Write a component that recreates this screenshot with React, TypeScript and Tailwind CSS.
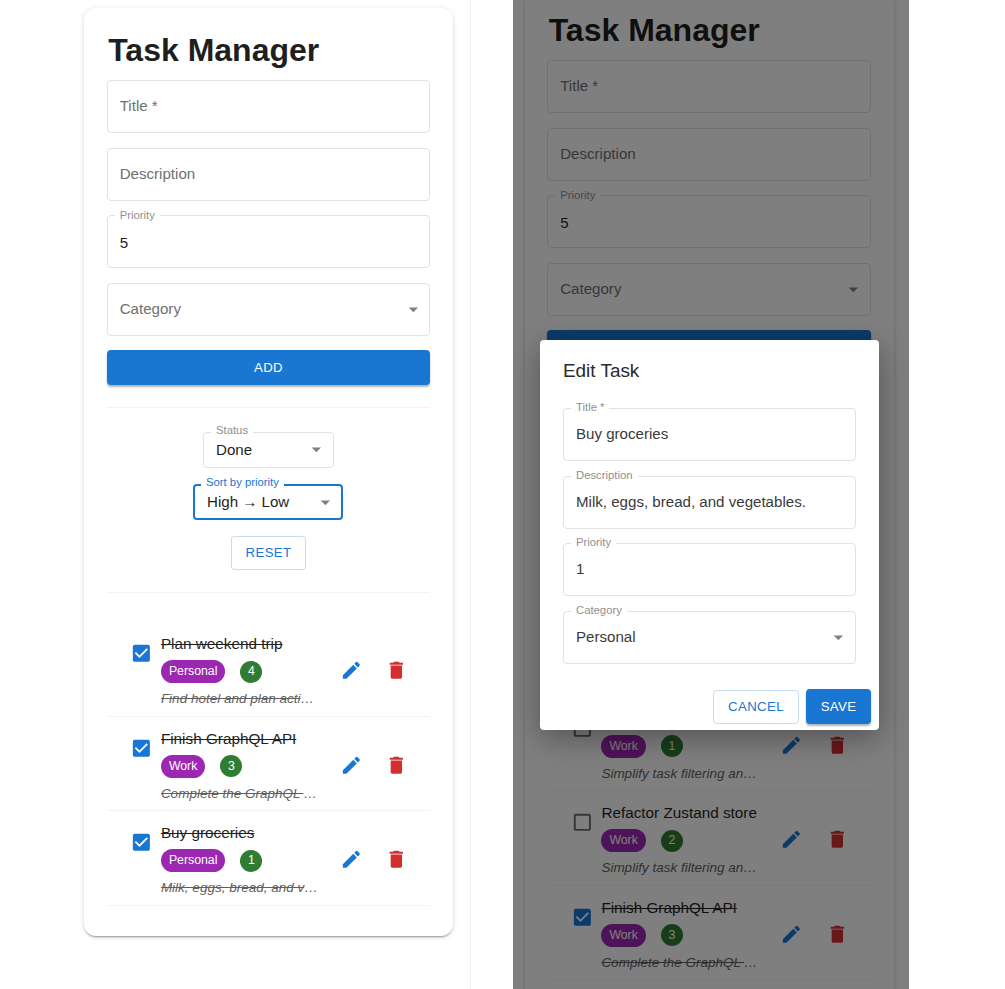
import React from "react";

const P = {
  edit: "M3 17.25V21h3.75L17.81 9.94l-3.75-3.75L3 17.25zM20.71 7.04c.39-.39.39-1.02 0-1.41l-2.34-2.34a.9959.9959 0 0 0-1.41 0l-1.83 1.83 3.75 3.75 1.83-1.83z",
  del: "M6 19c0 1.1.9 2 2 2h8c1.1 0 2-.9 2-2V7H6v12zM19 4h-3.5l-1-1h-5l-1 1H5v2h14V4z",
  checked: "M19 3H5c-1.11 0-2 .9-2 2v14c0 1.1.89 2 2 2h14c1.1 0 2-.9 2-2V5c0-1.1-.9-2-2-2zm-9 14l-5-5 1.41-1.41L10 14.17l7.59-7.59L19 8l-9 9z",
  blank: "M19 5v14H5V5h14m0-2H5c-1.1 0-2 .9-2 2v14c0 1.1.9 2 2 2h14c1.1 0 2-.9 2-2V5c0-1.1-.9-2-2-2z",
  arrow: "M7 10l5 5 5-5z",
};

function Icon({ d, className }: { d: string; className: string }) {
  return (
    <svg viewBox="0 0 24 24" className={className} fill="currentColor" aria-hidden="true">
      <path d={d} />
    </svg>
  );
}

function Field({ label, value, floated, select, dialog }: { label: string; value?: string; floated?: boolean; select?: boolean; dialog?: boolean }) {
  return (
    <div className="relative flex h-[53px] items-center rounded-[4px] border-[1.5px] border-[#e2e2e2] px-[12px]">
      {floated ? (
        <span className={`absolute left-[7px] bg-white px-[5px] text-[11.3px] leading-[13px] text-[#8f8f8f] ${dialog ? "top-[-8px]" : "top-[-7px]"}`}>{label}</span>
      ) : (
        <span className="text-[15.1px] text-[#707070]">{label}</span>
      )}
      {value && <span className={`text-[15.1px] ${dialog ? "text-[#3a3a3a]" : "mt-[4px] text-[#1f1f1f]"}`}>{value}</span>}
      {select && <Icon d={P.arrow} className="absolute right-[5px] top-[14px] h-[22.7px] w-[22.7px] text-[#808080]" />}
    </div>
  );
}

function MiniSelect({ label, value, focused, w }: { label: string; value: string; focused?: boolean; w: string }) {
  return (
    <div className={`relative flex h-[36px] items-center rounded-[4px] pl-[12px] ${w} ${focused ? "border-2 border-[#1976d2]" : "border-[1.5px] border-[#e2e2e2]"}`}>
      <span className={`absolute bg-white px-[5px] text-[11.3px] leading-[13px] ${focused ? "left-[6px] top-[-10px] text-[#1976d2]" : "left-[7px] top-[-9px] text-[#8f8f8f]"}`}>{label}</span>
      <span className="text-[15.1px] text-[#1f1f1f]">{value}</span>
      <Icon d={P.arrow} className={`absolute top-[5px] h-[22.7px] w-[22.7px] text-[#808080] ${focused ? "right-[4px]" : "right-[5px]"}`} />
    </div>
  );
}

type Task = { title: string; cat: string; pri: number; desc: string; done: boolean };

function Item({ t }: { t: Task }) {
  return (
    <li className="flex h-[94.5px] items-start border-b border-[#f3f3f3]">
      <Icon d={t.done ? P.checked : P.blank} className={`ml-[23.5px] mt-[20px] h-[22.7px] w-[22.7px] shrink-0 ${t.done ? "text-[#1976d2]" : "text-[#6b6b6b]"}`} />
      <div className="ml-[8px] mt-[13px] flex w-[157px] shrink-0 flex-col">
        <span className={`whitespace-nowrap text-[15.3px] leading-[18px] text-[#1f1f1f] ${t.done ? "line-through" : ""}`}>{t.title}</span>
        <div className="mt-[7px] flex items-center gap-[15px]">
          <span className="flex h-[23px] items-center rounded-full bg-[#9c27b0] px-[8px] text-[12.3px] text-white">{t.cat}</span>
          <span className="flex h-[22px] w-[22px] items-center justify-center rounded-full bg-[#2e7d32] text-[12.3px] text-white">{t.pri}</span>
        </div>
        <span className={`mt-[7px] truncate text-[13.5px] italic leading-[18px] text-[#5f5f5f] ${t.done ? "line-through" : ""}`}>{t.desc}</span>
      </div>
      <Icon d={P.edit} className="ml-[22px] mt-[37px] h-[22.7px] w-[22.7px] shrink-0 text-[#1976d2]" />
      <Icon d={P.del} className="ml-[22.5px] mt-[37px] h-[22.7px] w-[22.7px] shrink-0 text-[#d32f2f]" />
    </li>
  );
}

function Card({ tasks, status }: { tasks: Task[]; status: string }) {
  return (
    <div className="w-[369px] shrink-0 rounded-[12px] bg-white px-[22.7px] pb-[30px] pt-[23px] shadow-[0_2px_2px_-1px_rgba(0,0,0,0.35),0_1px_5px_rgba(0,0,0,0.15)]">
      <h1 className="mb-[11px] ml-[1.5px] text-[32px] font-bold leading-[38px] text-[#1f1f1f]">Task Manager</h1>
      <div className="flex flex-col gap-[14.5px]">
        <Field label="Title *" />
        <Field label="Description" />
        <Field label="Priority" value="5" floated />
        <Field label="Category" select />
        <button className="h-[35px] rounded-[4px] bg-[#1976d2] text-[13.2px] tracking-[0.38px] text-white shadow-[0_2px_2px_rgba(0,0,0,0.3)]">ADD</button>
      </div>
      <div className="mt-[22px] border-t border-[#f3f3f3]" />
      <div className="mt-[24px] flex flex-col items-center">
        <MiniSelect label="Status" value={status} w="w-[131px]" />
        <div className="mr-px mt-[16px]">
          <MiniSelect label="Sort by priority" value="High → Low" focused w="w-[150px]" />
        </div>
        <button className="mt-[16px] h-[34px] w-[75px] rounded-[3px] border-[1.5px] border-[#c8ddf2] text-[13.2px] tracking-[0.38px] text-[#1976d2]">RESET</button>
      </div>
      <div className="mt-[22px] border-t border-[#f3f3f3]" />
      <ul className="mt-[29px]">
        {tasks.map((t, i) => (
          <Item key={i} t={t} />
        ))}
      </ul>
    </div>
  );
}

const leftTasks: Task[] = [
  { title: "Plan weekend trip", cat: "Personal", pri: 4, desc: "Find hotel and plan activities for the trip", done: true },
  { title: "Finish GraphQL API", cat: "Work", pri: 3, desc: "Complete the GraphQL API and add tests", done: true },
  { title: "Buy groceries", cat: "Personal", pri: 1, desc: "Milk, eggs, bread, and vegetables.", done: true },
];

const rightTasks: Task[] = [
  { title: "Buy groceries", cat: "Personal", pri: 1, desc: "Milk, eggs, bread, and vegetables.", done: false },
  { title: "Refactor Zustand store", cat: "Work", pri: 1, desc: "Simplify task filtering and sorting logic", done: false },
  { title: "Refactor Zustand store", cat: "Work", pri: 2, desc: "Simplify task filtering and sorting logic", done: false },
  { title: "Finish GraphQL API", cat: "Work", pri: 3, desc: "Complete the GraphQL API and add tests", done: true },
  { title: "Plan weekend trip", cat: "Personal", pri: 4, desc: "Find hotel and plan activities for the trip", done: true },
];

export default function App() {
  return (
    <div className="flex h-[989px] w-[1005px] overflow-hidden bg-white font-['Liberation_Sans',Arial,sans-serif]">
      <div className="w-[471px] shrink-0 border-r border-[#f3f3f3] pl-[84px] pt-[8px]">
        <Card tasks={leftTasks} status="Done" />
      </div>
      <div className="relative ml-[42px] h-[989px] w-[396px] shrink-0 overflow-hidden bg-white">
        <div className="-mt-[12px] pl-[11.5px]">
          <Card tasks={rightTasks} status="All" />
        </div>
        <div className="absolute inset-0 bg-black/50" />
        <div className="absolute left-[27px] top-[340px] h-[390px] w-[339px] rounded-[4px] bg-white px-[23px] shadow-[0_8px_30px_rgba(0,0,0,0.35)]">
          <h2 className="mt-[19px] text-[18.9px] leading-[24px] text-[#2a2a2a]">Edit Task</h2>
          <div className="mt-[25px] flex flex-col gap-[14.5px]">
            <Field label="Title *" value="Buy groceries" floated dialog />
            <Field label="Description" value="Milk, eggs, bread, and vegetables." floated dialog />
            <Field label="Priority" value="1" floated dialog />
            <Field label="Category" value="Personal" floated select dialog />
          </div>
          <div className="absolute bottom-[6px] right-[8px] flex items-center gap-[7px]">
            <button className="h-[34px] w-[86px] rounded-[4px] border-[1.5px] border-[#c8ddf2] text-[13.2px] tracking-[0.38px] text-[#1976d2]">CANCEL</button>
            <button className="h-[35px] w-[65px] rounded-[4px] bg-[#1976d2] text-[13.2px] tracking-[0.38px] text-white shadow-[0_2px_2px_rgba(0,0,0,0.3)]">SAVE</button>
          </div>
        </div>
      </div>
    </div>
  );
}
